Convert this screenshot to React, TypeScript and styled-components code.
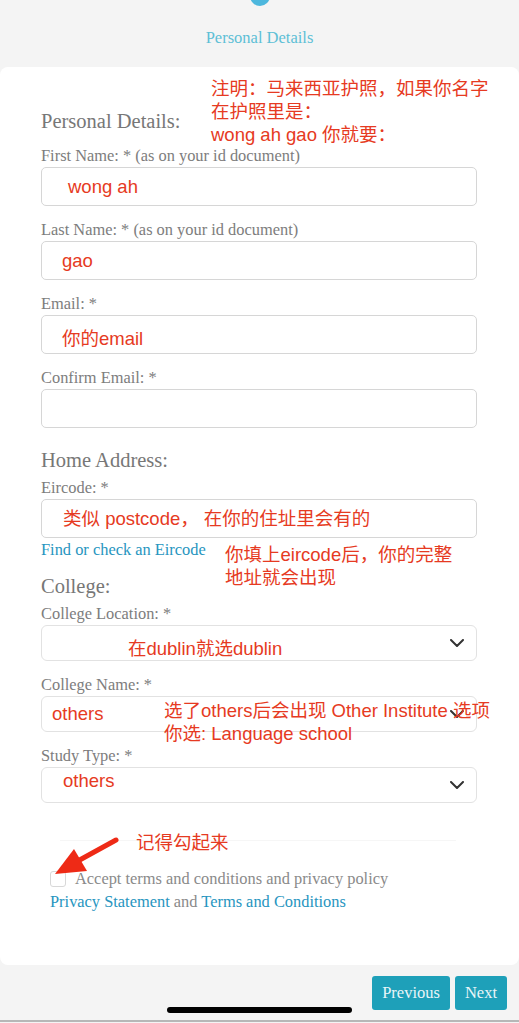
import React from "react";
import styled, { createGlobalStyle } from "styled-components";

const Global = createGlobalStyle`
  html, body { margin: 0; padding: 0; background: #f4f4f4; }
  * { box-sizing: border-box; }
`;

const Page = styled.div`
  position: relative;
  width: 519px;
  height: 1023px;
  overflow: hidden;
  background: #f4f4f4;
  display: flex;
  flex-direction: column;
  font-family: "Liberation Serif", "Times New Roman", serif;
`;

const Header = styled.div`
  height: 67px;
  display: flex;
  flex-direction: column;
  align-items: center;
`;

const StepDot = styled.div`
  width: 20px;
  height: 20px;
  margin-top: -14px;
  border-radius: 50%;
  background: #4db7dd;
`;

const StepTitle = styled.div`
  margin-top: 22px;
  font-size: 16.5px;
  line-height: 20px;
  color: #5dbfd6;
`;

const Card = styled.div`
  background: #fff;
  border-radius: 8px;
  padding: 40px 42px 53px 41px;
  display: flex;
  flex-direction: column;
`;

const SectionTitle = styled.div<{ $mt?: number; $mb?: number }>`
  font-size: 20.5px;
  line-height: 28px;
  color: #777;
  margin-top: ${(p) => p.$mt ?? 0}px;
  margin-bottom: ${(p) => p.$mb ?? 4}px;
`;

const Field = styled.div<{ $mb?: number }>`
  display: flex;
  flex-direction: column;
  gap: 1px;
  margin-bottom: ${(p) => p.$mb ?? 14}px;
`;

const Label = styled.div`
  font-size: 16.4px;
  line-height: 20px;
  color: #7d7d7d;
`;

const InputBox = styled.div`
  height: 39px;
  border: 1px solid #d6d6d6;
  border-radius: 5px;
  background: #fff;
`;

const SelectBox = styled.div`
  height: 36px;
  border: 1px solid #e2e2e2;
  border-radius: 6px;
  background: #fff;
  display: flex;
  align-items: center;
  justify-content: flex-end;
  padding-right: 12px;
`;

const Link = styled.a`
  color: #2795c0;
  text-decoration: none;
  font-size: 16.4px;
  line-height: 20px;
`;

const HelpLink = styled(Link)`
  margin-top: 2px;
  align-self: flex-start;
`;

const Divider = styled.div`
  height: 1px;
  background: #f6f6f6;
  margin: 37px 21px 0 19px;
`;

const Terms = styled.div`
  margin-top: 28px;
  padding-left: 9px;
  display: flex;
  flex-direction: column;
  gap: 3px;
  font-size: 16.4px;
  line-height: 20px;
  color: #8a8a8a;
`;

const CheckRow = styled.label`
  display: flex;
  align-items: center;
  gap: 9px;
`;

const CheckBox = styled.span`
  width: 16px;
  height: 16px;
  border: 1px solid #d8d8d8;
  border-radius: 3px;
  background: #fff;
  flex: none;
`;

const Footer = styled.div`
  flex: 1;
  display: flex;
  justify-content: flex-end;
  align-items: flex-start;
  gap: 5px;
  padding: 11px 12px 0 0;
  border-bottom: 2px solid #b7b7b7;
  margin-bottom: 1px;
`;

const Button = styled.button`
  height: 34px;
  padding: 0 10px;
  border: none;
  border-radius: 3px;
  background: #1ea0b9;
  color: #e9f5f8;
  font-family: "Liberation Serif", "Times New Roman", serif;
  font-size: 16.5px;
`;

const HomeIndicator = styled.div`
  position: absolute;
  left: 167px;
  top: 1007px;
  width: 185px;
  height: 6px;
  border-radius: 3px;
  background: #000;
`;

const Note = styled.div<{ $x: number; $y: number }>`
  position: absolute;
  left: ${(p) => p.$x}px;
  top: ${(p) => p.$y}px;
  font-family: "Liberation Sans", Arial, "Noto Sans CJK SC", sans-serif;
  font-size: 18.5px;
  line-height: 23px;
  color: #e63a22;
  white-space: nowrap;
`;

const ArrowSvg = styled.svg`
  position: absolute;
  left: 0;
  top: 0;
  pointer-events: none;
`;

const Chevron = () => (
  <svg width="14" height="8" viewBox="0 0 14 8">
    <polyline points="1,1 7,7 13,1" fill="none" stroke="#333" strokeWidth="2" strokeLinecap="round" strokeLinejoin="round" />
  </svg>
);

export default function App() {
  return (
    <>
      <Global />
      <Page>
        <Header>
          <StepDot />
          <StepTitle>Personal Details</StepTitle>
        </Header>
        <Card>
          <SectionTitle $mb={11}>Personal Details:</SectionTitle>
          <Field>
            <Label>First Name: * (as on your id document)</Label>
            <InputBox />
          </Field>
          <Field>
            <Label>Last Name: * (as on your id document)</Label>
            <InputBox />
          </Field>
          <Field>
            <Label>Email: *</Label>
            <InputBox />
          </Field>
          <Field>
            <Label>Confirm Email: *</Label>
            <InputBox />
          </Field>
          <SectionTitle $mt={4}>Home Address:</SectionTitle>
          <Field $mb={0}>
            <Label>Eircode: *</Label>
            <InputBox />
          </Field>
          <HelpLink href="#">Find or check an Eircode</HelpLink>
          <SectionTitle $mt={12}>College:</SectionTitle>
          <Field>
            <Label>College Location: *</Label>
            <SelectBox><Chevron /></SelectBox>
          </Field>
          <Field>
            <Label>College Name: *</Label>
            <SelectBox><Chevron /></SelectBox>
          </Field>
          <Field $mb={0}>
            <Label>Study Type: *</Label>
            <SelectBox><Chevron /></SelectBox>
          </Field>
          <Divider />
          <Terms>
            <CheckRow>
              <CheckBox />
              Accept terms and conditions and privacy policy
            </CheckRow>
            <div>
              <Link href="#">Privacy Statement</Link> and <Link href="#">Terms and Conditions</Link>
            </div>
          </Terms>
        </Card>
        <Footer>
          <Button>Previous</Button>
          <Button>Next</Button>
        </Footer>

        <Note $x={211} $y={77}>
          注明：马来西亚护照，如果你名字
          <br />
          在护照里是：
          <br />
          wong ah gao 你就要：
        </Note>
        <Note $x={68} $y={175}>wong ah</Note>
        <Note $x={62} $y={249}>gao</Note>
        <Note $x={62} $y={327}>你的email</Note>
        <Note $x={63} $y={507}>类似 postcode， 在你的住址里会有的</Note>
        <Note $x={225} $y={543}>
          你填上eircode后，你的完整
          <br />
          地址就会出现
        </Note>
        <Note $x={128} $y={637}>在dublin就选dublin</Note>
        <Note $x={52} $y={702}>others</Note>
        <Note $x={164} $y={699}>
          选了others后会出现 Other Institute 选项
          <br />
          你选: Language school
        </Note>
        <Note $x={63} $y={769}>others</Note>
        <Note $x={136} $y={831}>记得勾起来</Note>
        <ArrowSvg width="519" height="1023" viewBox="0 0 519 1023">
          <line x1="116" y1="840" x2="76" y2="862" stroke="#ee2a16" strokeWidth="5" strokeLinecap="round" />
          <polygon points="55,874 74,849 87,871" fill="#ee2a16" />
        </ArrowSvg>
        <HomeIndicator />
      </Page>
    </>
  );
}
